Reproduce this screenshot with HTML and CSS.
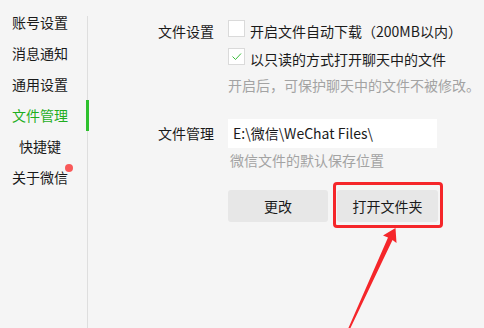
FILE: index.html
```html
<!DOCTYPE html>
<html lang="zh-CN">
<head>
<meta charset="utf-8">
<title>文件管理</title>
<link rel="stylesheet" href="styles.css">
</head>
<body>
<div class="app">
  <nav class="sidebar">
    <ul class="menu">
      <li class="item">账号设置</li>
      <li class="item">消息通知</li>
      <li class="item">通用设置</li>
      <li class="item active">文件管理</li>
      <li class="item">快捷键</li>
      <li class="item"><span class="dotted">关于微信<i class="dot"></i></span></li>
    </ul>
  </nav>
  <main class="panel">
    <section class="group">
      <div class="label">文件设置</div>
      <div class="content">
        <div class="option"><span class="box"></span><span>开启文件自动下载（200MB以内）</span></div>
        <div class="option second"><span class="box"><svg width="15" height="15" viewBox="0 0 15 15"><polyline points="3.5,7.5 6.5,10.5 12,4.5" fill="none" stroke="#3cbf3c" stroke-width="1"/></svg></span><span>以只读的方式打开聊天中的文件</span></div>
        <div class="hint">开启后，可保护聊天中的文件不被修改。</div>
      </div>
    </section>
    <section class="group group2">
      <div class="label tall">文件管理</div>
      <div class="content">
        <div class="path">E:\微信\WeChat Files\</div>
        <div class="hint hint2">微信文件的默认保存位置</div>
        <div class="buttons">
          <button class="btn">更改</button>
          <div class="marked">
            <button class="btn">打开文件夹</button>
            <span class="highlight"></span>
          </div>
        </div>
      </div>
    </section>
  </main>
  <svg class="arrow" width="484" height="328" viewBox="0 0 484 328">
    <polygon points="395.5,228 383,235.5 388,237.5 348,329 350,329 392.5,240 396.5,243" fill="#f5262a"/>
  </svg>
</div>
</body>
</html>
```

FILE: styles.css
```css
html, body {
  margin: 0;
  padding: 0;
  background: #f5f5f5;
}
body {
  font-family: "Noto Sans CJK SC", "Microsoft YaHei", sans-serif;
  font-size: 14px;
  color: #1a1a1a;
  width: 484px;
  height: 328px;
  overflow: hidden;
}
.app {
  position: relative;
  display: flex;
  height: 328px;
}
.sidebar {
  width: 87px;
  margin-top: 16px;
  border-right: 1px solid #dedede;
  flex: none;
}
.menu {
  list-style: none;
  margin: -9.5px 0 0 0;
  padding: 0;
}
.item {
  position: relative;
  width: 80px;
  height: 31px;
  line-height: 31px;
  text-align: center;
}
.item.active {
  color: #1fae1f;
  width: 87px;
  padding-right: 7px;
  box-sizing: border-box;
}
.item.active::after {
  content: "";
  position: absolute;
  right: -2px;
  top: 0;
  width: 3px;
  height: 31px;
  background: #2ec12e;
}
.dotted {
  position: relative;
  display: inline-block;
  line-height: 20px;
}
.dot {
  position: absolute;
  right: -5px;
  top: -3px;
  width: 8px;
  height: 8px;
  border-radius: 50%;
  background: #f95959;
}
.panel {
  flex: 1;
  padding: 21px 0 0 70px;
}
.group {
  display: grid;
  grid-template-columns: 70px auto;
}
.group2 {
  margin-top: 24px;
}
.label {
  line-height: 20px;
}
.label.tall {
  line-height: 29px;
}
.option {
  display: flex;
  align-items: flex-start;
  height: 20px;
  line-height: 20px;
  white-space: nowrap;
}
.option.second {
  margin-top: 8px;
}
.box {
  width: 15px;
  height: 15px;
  margin-top: -1px;
  margin-right: 5px;
  background: #ffffff;
  border: 1px solid #dadada;
  flex: none;
}
.box svg {
  display: block;
}
.hint {
  margin-top: 6px;
  line-height: 20px;
  color: #a3a3a3;
  white-space: nowrap;
}
.hint2 {
  margin-top: 2px;
  padding-left: 2px;
}
.path {
  width: 204px;
  height: 29px;
  line-height: 29px;
  padding-left: 5px;
  background: #ffffff;
  white-space: nowrap;
}
.buttons {
  display: flex;
  gap: 9px;
  margin-top: 20px;
}
.btn {
  width: 100px;
  height: 32px;
  border: none;
  border-radius: 3px;
  background: #e7e7e7;
  font-family: inherit;
  font-size: 14px;
  color: #1a1a1a;
  padding: 0;
}
.marked {
  position: relative;
}
.marked .btn {
  width: 101px;
}
.highlight {
  position: absolute;
  left: -4px;
  top: -8px;
  width: 104px;
  height: 40px;
  border: 3px solid #f5262a;
  border-radius: 4px;
}
.arrow {
  position: absolute;
  left: 0;
  top: 0;
  pointer-events: none;
}
```
